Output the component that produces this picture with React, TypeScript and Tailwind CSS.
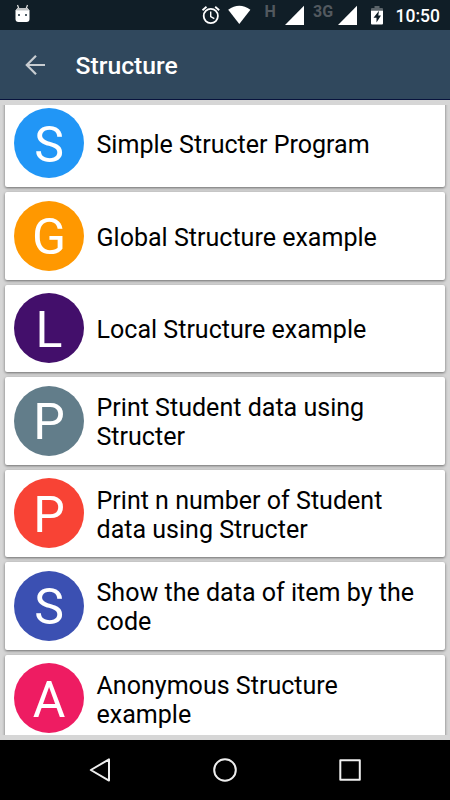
const items = [
  { letter: 'S', color: 'bg-[#2196f6]', lines: ['Simple Structer Program'] },
  { letter: 'G', color: 'bg-[#ff9800]', lines: ['Global Structure example'] },
  { letter: 'L', color: 'bg-[#430f6b]', lines: ['Local Structure example'] },
  { letter: 'P', color: 'bg-[#627d8a]', lines: ['Print Student data using', 'Structer'] },
  { letter: 'P', color: 'bg-[#f84335]', lines: ['Print n number of Student', 'data using Structer'] },
  { letter: 'S', color: 'bg-[#3b50b2]', lines: ['Show the data of item by the', 'code'] },
  { letter: 'A', color: 'bg-[#ee1c62]', lines: ['Anonymous Structure', 'example'] },
];

function StatusBar() {
  return (
    <div className="flex h-[30px] shrink-0 items-center bg-[#101e27] text-white">
      <svg className="ml-[14px] h-[30px] w-[18px] shrink-0" viewBox="0 0 18 30">
        <path d="M3.5 5 5 9M13.5 5 12 9" stroke="#e5e5e5" strokeWidth="1.2" />
        <path d="M3.5 8h10l2 2.5v8.5q0 3-3 3h-8q-3 0-3-3v-8.5z" fill="#fff" />
        <path d="M3.5 8h10l1.5 2.5h-13z" fill="#c0c3c5" />
        <path d="M4 14h2v2H4zM11 14h2v2h-2z" fill="#526069" />
      </svg>
      <svg className="ml-[169px] h-[30px] w-[20px] shrink-0" viewBox="0 0 20 30" fill="none" stroke="#fff">
        <circle cx="9.8" cy="16" r="7.1" strokeWidth="1.8" />
        <path d="m1.5 10.2 4-3.4M18.2 10.2l-4-3.4" strokeWidth="1.8" />
        <path d="M9.7 11.5v5l3.6 2.2" strokeWidth="1.4" />
      </svg>
      <svg className="ml-[7px] h-[30px] w-[24px] shrink-0" viewBox="0 0 24 30">
        <path d="M.2 9.7Q11.3 2 22.4 9.7L11.3 24z" fill="#fff" />
      </svg>
      <div className="ml-[12.5px] h-[30px] w-[16px] shrink-0 pt-[3px] text-[16px] leading-[18px] font-bold text-[#52595f]">H</div>
      <svg className="ml-[4.5px] h-[30px] w-[20px] shrink-0" viewBox="0 0 20 30">
        <path d="M0 25 19 5.7V25z" fill="#fff" />
      </svg>
      <div className="ml-[8px] h-[30px] w-[22px] shrink-0 pt-[3px] text-[16px] leading-[18px] font-bold whitespace-nowrap text-[#52595f]">3G</div>
      <svg className="ml-[3px] h-[30px] w-[20px] shrink-0" viewBox="0 0 20 30">
        <path d="M0 25 19 5.7V25z" fill="#fff" />
      </svg>
      <svg className="ml-[12px] h-[30px] w-[14px] shrink-0" viewBox="0 0 14 30">
        <path d="M4.5 6h5v2h2.5q1 0 1 1v2H1V9q0-1 1-1h2.5z" fill="#5b646a" />
        <path d="M1 10.8h12v12.7q0 1-1 1H2q-1 0-1-1z" fill="#fff" />
        <path d="m9 10.8-5.5 6.9h3v4.7l4.5-6.9H8.3z" fill="#101e27" />
      </svg>
      <div className="ml-[11.5px] pt-[3px] text-[17.5px] leading-none font-medium whitespace-nowrap">10:50</div>
    </div>
  );
}

function AppBar() {
  return (
    <div className="flex h-[70px] shrink-0 items-center border-b border-[#08133d] bg-[#30485d]">
      <svg className="ml-[25px] h-[22px] w-[22px]" viewBox="0 0 22 22" fill="none" stroke="#c8cdd1" strokeWidth="2.2">
        <path d="M20 11H2M11 1.8 1.8 11l9.2 9.2" />
      </svg>
      <h1 className="ml-[28.5px] pt-[4px] text-[24.7px] leading-none font-medium text-white">Structure</h1>
    </div>
  );
}

function Card({ letter, color, lines }: (typeof items)[number]) {
  return (
    <li className="flex h-[87.5px] shrink-0 items-center rounded-[2px] bg-white pt-[0.4px] pl-[9px] shadow-[0_1px_3px_rgba(0,0,0,0.5)]">
      <div className={`flex size-[70px] shrink-0 items-center justify-center rounded-full pt-[3px] text-[50px] leading-none text-white ${color}`}>
        {letter}
      </div>
      <div className="ml-[12.5px] pt-[2.6px] text-[25.05px] leading-[29px] whitespace-nowrap text-black">
        {lines.map((line) => (
          <div key={line}>{line}</div>
        ))}
      </div>
    </li>
  );
}

function NavBar() {
  return (
    <div className="flex h-[60px] shrink-0 items-center bg-black">
      <svg className="h-[60px] w-[450px]" viewBox="0 0 450 60" fill="none" stroke="#eee" strokeWidth="2" strokeLinejoin="round">
        <path d="M90.8 30 109 19.4v21.2z" />
        <circle cx="225" cy="30" r="10.8" />
        <rect x="340.3" y="20.3" width="19.5" height="19.5" />
      </svg>
    </div>
  );
}

export default function App() {
  return (
    <div className="flex h-[800px] w-[450px] flex-col overflow-hidden font-['Roboto',sans-serif]">
      <StatusBar />
      <AppBar />
      <main className="h-[640px] bg-[#d6d6d6] py-[5px]">
        <div className="h-[630px] overflow-hidden px-[5px]">
          <ul className="-mt-[5.5px] flex flex-col gap-[5px]">
            {items.map((item) => (
              <Card key={item.lines[0]} {...item} />
            ))}
          </ul>
        </div>
      </main>
      <NavBar />
    </div>
  );
}
